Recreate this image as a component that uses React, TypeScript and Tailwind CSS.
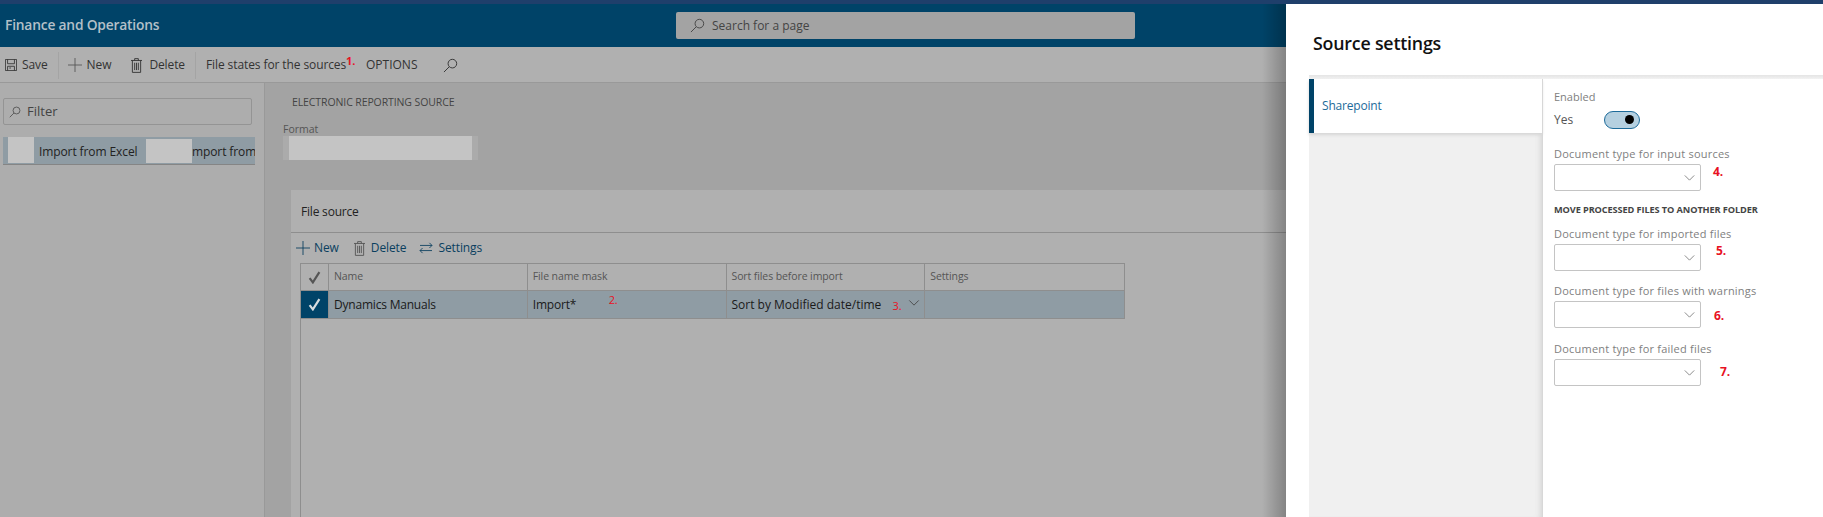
const font = 'font-["Open_Sans","Noto_Sans",sans-serif]';

function SearchIcon({ className }: { className?: string }) {
  return (
    <svg viewBox="0 0 16 16" fill="none" stroke="currentColor" strokeWidth="1" className={className}>
      <circle cx="10" cy="6" r="4.6" />
      <path d="M6.6 9.4 1 15" />
    </svg>
  );
}

function PlusIcon({ className }: { className?: string }) {
  return (
    <svg viewBox="0 0 16 16" fill="none" stroke="currentColor" strokeWidth="1" className={className}>
      <path d="M0 8h16M8 0v16" />
    </svg>
  );
}

function TrashIcon({ className }: { className?: string }) {
  return (
    <svg viewBox="0 0 12 16" fill="none" stroke="currentColor" strokeWidth="1" className={className}>
      <path d="M0 2.5h12M4 2.5V.5h4v2M1.5 2.5v13h9v-13M4 5v8M6 5v8M8 5v8" />
    </svg>
  );
}

function SaveIcon({ className }: { className?: string }) {
  return (
    <svg viewBox="0 0 14 14" fill="none" stroke="currentColor" strokeWidth="1" className={className}>
      <path d="M.5.5h13v13H.5zM3 .5v5h8v-5M3 13.5V8.5h8v5M5 10.5h2" />
    </svg>
  );
}

function SwapIcon({ className }: { className?: string }) {
  return (
    <svg viewBox="0 0 16 14" fill="none" stroke="currentColor" strokeWidth="1" className={className}>
      <path d="M1 4h14M12 1l3 3-3 3M15 10H1M4 7l-3 3 3 3" />
    </svg>
  );
}

function Chevron({ className }: { className?: string }) {
  return (
    <svg viewBox="0 0 12 7" fill="none" stroke="currentColor" strokeWidth="1" className={className}>
      <path d="M.5.5 6 6 11.5.5" />
    </svg>
  );
}

function Check({ className }: { className?: string }) {
  return (
    <svg viewBox="0 0 12 12" fill="none" stroke="currentColor" strokeWidth="2" className={className}>
      <path d="M1.5 6.5 4.5 10.5 10.5 1" />
    </svg>
  );
}

function Note({ children, className }: { children: string; className?: string }) {
  return <span className={`absolute font-bold text-[#e81123] ${className}`}>{children}</span>;
}

const columns = [
  { name: 'Name', width: 'w-[199px]' },
  { name: 'File name mask', width: 'w-[199px]' },
  { name: 'Sort files before import', width: 'w-[199px]' },
  { name: 'Settings', width: 'w-[200px]' },
];

function SourceSelect({ label, note, noteClass, className }: { label: string; note: string; noteClass: string; className?: string }) {
  return (
    <div className={`relative ${className}`}>
      <div className="h-[19px] text-[11px] leading-[18px] tracking-[0.02em] text-[#808080]">{label}</div>
      <div className="flex h-[27px] w-[147px] items-center justify-end rounded-[2px] border border-[#c4c4c4] pr-[5px]">
        <Chevron className="h-[6px] w-[11px] text-[#777777]" />
      </div>
      <Note className={`top-[19px] text-[12px] leading-[18px] ${noteClass}`}>{note}</Note>
    </div>
  );
}

export default function App() {
  return (
    <div className={`relative flex h-[517px] w-[1823px] flex-col overflow-hidden bg-[#a3a3a3] text-[#333333] ${font}`}>
      <div className="h-[4px] shrink-0 bg-[#1f3f6b]" />

      <header className="relative flex h-[43px] shrink-0 items-center bg-[#004368] pl-[5px]">
        <span className="text-[13.8px] font-semibold tracking-[-0.2px] text-[#b4c0c8]">Finance and Operations</span>
        <div className="absolute left-[676px] top-[8px] flex h-[27px] w-[459px] items-center gap-[7px] rounded-[2px] bg-[#a3a3a3] pl-[14px] text-[12px] text-[#444444]">
          <SearchIcon className="h-[15px] w-[15px]" />
          Search for a page
        </div>
      </header>

      <div className="relative flex h-[36px] shrink-0 items-center border-b border-[#999999] bg-[#b0b0b0] pl-[5px] pt-[1px] text-[12px] tracking-[-0.1px]">
        <SaveIcon className="h-[12px] w-[12px]" />
        <span className="ml-[5px]">Save</span>
        <div className="ml-[10px] h-[27px] w-px bg-[#a4a4a4]" />
        <PlusIcon className="ml-[9px] h-[14px] w-[14px] text-[#555555]" />
        <span className="ml-[5px]">New</span>
        <TrashIcon className="ml-[20px] h-[15px] w-[11px]" />
        <span className="ml-[7px]">Delete</span>
        <div className="ml-[10px] h-[27px] w-px bg-[#a4a4a4]" />
        <span className="ml-[10px] w-[140px] whitespace-nowrap">File states for the sources</span>
        <Note className="left-[346px] top-[6px] text-[11px]">1.</Note>
        <span className="ml-[20px] w-[52px] tracking-normal">OPTIONS</span>
        <SearchIcon className="ml-[25px] h-[15px] w-[15px]" />
      </div>

      <div className="flex min-h-0 flex-1">
        <aside className="h-full w-[265px] shrink-0 border-r border-[#999999] bg-[#adadad] pt-[15px]">
          <div className="ml-[3px] flex h-[27px] w-[249px] items-center gap-[6px] rounded-[2px] border border-[#949494] pl-[5px] pt-[1px] text-[13px] text-[#444444]">
            <SearchIcon className="h-[12px] w-[12px]" />
            Filter
          </div>
          <div className="relative ml-[3px] mt-[12px] flex h-[28px] w-[252px] items-center overflow-hidden whitespace-nowrap border-b border-[#858585] bg-[#8f9ca4] pt-[2px] text-[12px] tracking-[-0.1px] text-[#222222]">
            <div className="absolute left-[5px] top-0 h-[26px] w-[26px] bg-[#c4c4c4]" />
            <span className="ml-[36px]">Import from Excel</span>
            <div className="absolute left-[143px] top-[2px] h-[24px] w-[46px] bg-[#c4c4c4]" />
            <span className="absolute left-[189px]">mport from</span>
          </div>
        </aside>

        <main className="min-w-0 flex-1 pt-[11px]">
          <div className="ml-[27px] text-[10.5px] leading-[16px] tracking-[-0.1px] text-[#444444]">ELECTRONIC REPORTING SOURCE</div>
          <div className="ml-[18px] mt-[12px] text-[10.5px] leading-[14px] text-[#555555]">Format</div>
          <div className="ml-[18px] h-[24px] w-[195px] bg-[#ababab] px-[6px]">
            <div className="h-full w-full bg-[#c4c4c4]" />
          </div>

          <section className="ml-[26px] mt-[30px] h-[400px] bg-[#b0b0b0]">
            <div className="flex h-[43px] items-center border-b border-[#8e8e8e] pl-[10px] pt-[1px] text-[12px] tracking-[-0.2px] text-[#222222]">File source</div>
            <div className="flex h-[30px] items-center pl-[5px] text-[12px] tracking-[-0.1px] text-[#0a3f5f]">
              <PlusIcon className="h-[14px] w-[14px]" />
              <span className="ml-[4px]">New</span>
              <TrashIcon className="ml-[15px] h-[15px] w-[11px] text-[#555555]" />
              <span className="ml-[6px]">Delete</span>
              <SwapIcon className="ml-[13px] h-[12px] w-[14px]" />
              <span className="ml-[5px]">Settings</span>
            </div>

            <div className="ml-[9px] h-[285px] w-[825px] border-l border-[#8e8e8e]">
              <div className="flex h-[28px] items-stretch border-y border-[#8e8e8e] text-[10.5px] tracking-[-0.1px] text-[#555555]">
                <div className="flex w-[28px] items-center justify-center border-r border-[#8e8e8e]">
                  <Check className="h-[13px] w-[13px] text-[#555555]" />
                </div>
                {columns.map((c) => (
                  <div key={c.name} className={`flex items-center border-r border-[#8e8e8e] pl-[5px] ${c.width}`}>
                    {c.name}
                  </div>
                ))}
              </div>
              <div className="flex h-[28px] items-stretch border-b border-[#8e8e8e] bg-[#8f9ca4] text-[12px] tracking-[-0.2px] text-[#1a1a1a]">
                <div className="flex w-[28px] items-center justify-center border-r border-[#8e8e8e] bg-[#004368]">
                  <Check className="h-[13px] w-[13px] text-[#d8dde0]" />
                </div>
                <div className="flex w-[199px] items-center border-r border-[#8e8e8e] pl-[5px]">Dynamics Manuals</div>
                <div className="relative flex w-[199px] items-center border-r border-[#8e8e8e] pl-[5px]">
                  Import*
                  <Note className="left-[81px] top-[1px] text-[11px] font-normal">2.</Note>
                </div>
                <div className="relative flex w-[199px] items-center border-r border-[#8e8e8e] pl-[5px] tracking-normal">
                  Sort by Modified date/time
                  <Note className="left-[166px] top-[7px] text-[11px] font-normal">3.</Note>
                  <Chevron className="absolute right-[4px] top-[9px] h-[6px] w-[12px] text-[#444444]" />
                </div>
                <div className="w-[200px] border-r border-[#8e8e8e]" />
              </div>
            </div>
          </section>
        </main>
      </div>

      <div className="absolute bottom-0 right-[537px] top-[4px] w-[24px] bg-gradient-to-r from-transparent to-[#00000040]" />

      <aside className="absolute bottom-0 right-0 top-[4px] flex w-[537px] flex-col bg-white pl-[23px]">
        <h1 className="ml-[4px] flex h-[71px] shrink-0 items-center pt-[7px] text-[17.8px] font-semibold tracking-[-0.2px] text-[#111111]">Source settings</h1>
        <div className="flex min-h-0 flex-1 flex-col">
          <div className="h-[4px] shrink-0 bg-gradient-to-b from-[#e4e4e4] to-[#f2f2f2]" />
          <div className="flex min-h-0 flex-1">
            <nav className="h-full w-[234px] shrink-0 border-r border-[#d8d8d8] bg-[#f0f0f0] shadow-[inset_-6px_0_6px_-5px_#d0d0d0]">
              <div className="flex h-[54px] items-center border-l-[5px] border-[#004368] bg-white pl-[8px] text-[12px] tracking-[-0.2px] text-[#1d6b9a] shadow-[0_2px_3px_#d5d5d5]">Sharepoint</div>
            </nav>
            <div className="flex-1 pl-[11px] pt-[9px]">
              <div className="h-[19px] text-[11px] leading-[18px] text-[#808080]">Enabled</div>
              <div className="flex h-[25px] items-center text-[12px] text-[#555555]">
                <span className="w-[50px]">Yes</span>
                <div className="flex h-[18px] w-[36px] items-center justify-end rounded-full border border-[#1d6b9a] bg-[#b5d0e0] pr-[5px]">
                  <div className="h-[9px] w-[9px] rounded-full bg-black" />
                </div>
              </div>
              <SourceSelect className="mt-[13px]" label="Document type for input sources" note="4." noteClass="left-[159px] !top-[18px]" />
              <div className="mt-[11px] h-[16px] text-[9.2px] font-bold leading-[16px] tracking-[-0.1px] text-[#444444]">MOVE PROCESSED FILES TO ANOTHER FOLDER</div>
              <SourceSelect className="mt-[7px]" label="Document type for imported files" note="5." noteClass="left-[162px] !top-[17px]" />
              <SourceSelect className="mt-[11px]" label="Document type for files with warnings" note="6." noteClass="left-[160px] !top-[25px]" />
              <SourceSelect className="mt-[12px]" label="Document type for failed files" note="7." noteClass="left-[166px] !top-[23px]" />
            </div>
          </div>
        </div>
      </aside>
    </div>
  );
}
